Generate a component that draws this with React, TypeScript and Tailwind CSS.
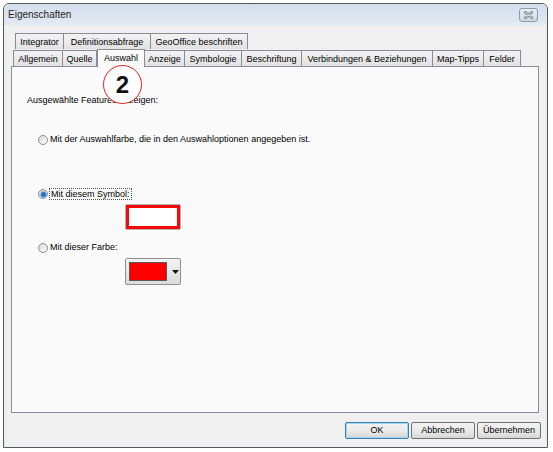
import React from "react";

const rowOne = [
  { label: "Integrator", w: "w-[49px]" },
  { label: "Definitionsabfrage", w: "w-[88px]" },
  { label: "GeoOffice beschriften", w: "w-[98px]" },
];

const rowTwo = [
  { label: "Allgemein", w: "w-[50px]" },
  { label: "Quelle", w: "w-[35px]" },
  { label: "Auswahl", w: "w-[48px]", active: true },
  { label: "Anzeige", w: "w-[41px]" },
  { label: "Symbologie", w: "w-[58px]" },
  { label: "Beschriftung", w: "w-[61px]" },
  { label: "Verbindungen & Beziehungen", w: "w-[132px]" },
  { label: "Map-Tipps", w: "w-[52px]" },
  { label: "Felder", w: "w-[38px]" },
];

function Radio({ checked }: { checked?: boolean }) {
  return (
    <span className="flex h-[10px] w-[10px] shrink-0 items-center justify-center rounded-full border border-[#8f8f8f] bg-linear-to-br from-[#d9d9d9] to-[#fdfdfd]">
      {checked && (
        <span className="h-[5px] w-[5px] rounded-full bg-[#2a6fc9] shadow-[0_0_1px_1px_#8fb8ea]" />
      )}
    </span>
  );
}

function Tab({ label, w, active }: { label: string; w: string; active?: boolean }) {
  if (active) {
    return (
      <div
        className={`${w} relative z-10 -mb-px flex h-[18px] items-start justify-center border border-b-0 border-[#898c95] bg-[#fafafa] pt-[2px] text-[9px] leading-[12px] text-black`}
      >
        {label}
      </div>
    );
  }
  return (
    <div
      className={`${w} flex h-[16px] items-center justify-center border border-b-0 border-[#898c95] bg-linear-to-b from-[#f3f3f3] to-[#e2e2e2] text-[9px] leading-[12px] text-black -ml-px first:ml-0`}
    >
      {label}
    </div>
  );
}

function Button({ label, primary }: { label: string; primary?: boolean }) {
  return (
    <div
      className={`flex h-[17px] items-center justify-center rounded-[2px] border bg-linear-to-b from-[#f2f2f2] via-[#ebebeb] to-[#d6d6d6] text-[9px] text-black ${
        primary ? "w-[64px] border-[#3c7fb1] shadow-[inset_0_0_0_1px_#9fd6f5]" : "w-[64px] border-[#707070]"
      }`}
    >
      {label}
    </div>
  );
}

export default function App() {
  return (
    <div className="h-[452px] w-[553px] bg-white pl-[3px] pt-[3px] font-['Liberation_Sans',Arial,sans-serif]">
      <div className="flex h-[445px] w-[545px] flex-col rounded-t-[6px] border border-[#5a5a5a] bg-[#f0f0f0] shadow-[inset_0_0_0_1px_#e8edf3]">
        {/* title bar */}
        <div className="flex h-[21px] items-center justify-between rounded-t-[5px] bg-linear-to-b from-[#d2dded] to-[#e4eaf3] pl-[4px] pr-[9px]">
          <span className="text-[10px] text-[#1e1e1e]">Eigenschaften</span>
          <div className="flex h-[14px] w-[19px] items-center justify-center rounded-[3px] border border-[#8a9ab0] bg-linear-to-b from-[#e9eef5] to-[#cfd9e6]">
            <svg width="9" height="8" viewBox="0 0 9 8">
              <path
                d="M1 1 L8 7 M8 1 L1 7"
                stroke="#6f7782"
                strokeWidth="2.6"
                strokeLinecap="round"
              />
              <path
                d="M1 1 L8 7 M8 1 L1 7"
                stroke="#f4f6f9"
                strokeWidth="1"
                strokeLinecap="round"
              />
            </svg>
          </div>
        </div>

        {/* tabs */}
        <div className="mt-[8px] flex pl-[11px]">
          {rowOne.map((t) => (
            <Tab key={t.label} label={t.label} w={t.w} />
          ))}
        </div>
        <div className="flex items-end pl-[9px]">
          {rowTwo.map((t) => (
            <Tab key={t.label} label={t.label} w={t.w} active={t.active} />
          ))}
        </div>

        {/* panel */}
        <div className="relative ml-[7px] flex h-[347px] w-[528px] flex-col border border-[#898c95] bg-[#fafafa] text-[9px] text-black">
          <div className="absolute left-[91px] top-[-2px] z-20 flex h-[39px] w-[39px] items-center justify-center rounded-full border-[1.5px] border-[#e3231e] bg-white text-[24px] font-bold leading-none text-[#111]">
            2
          </div>

          <div className="ml-[15px] mt-[27px] h-[12px] leading-[12px]">
            Ausgewählte Features anzeigen:
          </div>

          <div className="ml-[26px] mt-[28px] flex h-[12px] items-center gap-[2px]">
            <Radio />
            <span>Mit der Auswahlfarbe, die in den Auswahloptionen angegeben ist.</span>
          </div>

          <div className="ml-[26px] mt-[42px] flex h-[12px] items-center gap-[1px]">
            <Radio checked />
            <span className="border border-dotted border-[#555] px-[1px] leading-[10px]">
              Mit diesem Symbol:
            </span>
          </div>

          <div className="ml-[113px] mt-[4px] h-[26px] w-[56px] rounded-[2px] border border-[#b0b0b0] p-0">
            <div className="h-full w-full border-[3px] border-[#f50a0a] bg-[radial-gradient(#e4e4e4_0.6px,transparent_0.7px)] bg-[length:4px_4px] bg-white" />
          </div>

          <div className="ml-[26px] mt-[12px] flex h-[12px] items-center gap-[2px]">
            <Radio />
            <span>Mit dieser Farbe:</span>
          </div>

          <div className="ml-[113px] mt-[4px] flex h-[27px] w-[56px] items-center gap-[3px] rounded-[2px] border border-[#8e8e8e] bg-linear-to-b from-[#f3f3f3] to-[#dcdcdc] pl-[3px]">
            <div className="h-[19px] w-[38px] border border-[#5a5a5a] bg-[#ff0000]" />
            <svg width="7" height="4" viewBox="0 0 7 4" className="ml-[2px]">
              <path d="M0 0 H7 L3.5 4 Z" fill="#111" />
            </svg>
          </div>
        </div>

        {/* buttons */}
        <div className="mr-[6px] mt-[9px] flex justify-end gap-[2px]">
          <Button label="OK" primary />
          <Button label="Abbrechen" />
          <Button label="Übernehmen" />
        </div>
      </div>
    </div>
  );
}
